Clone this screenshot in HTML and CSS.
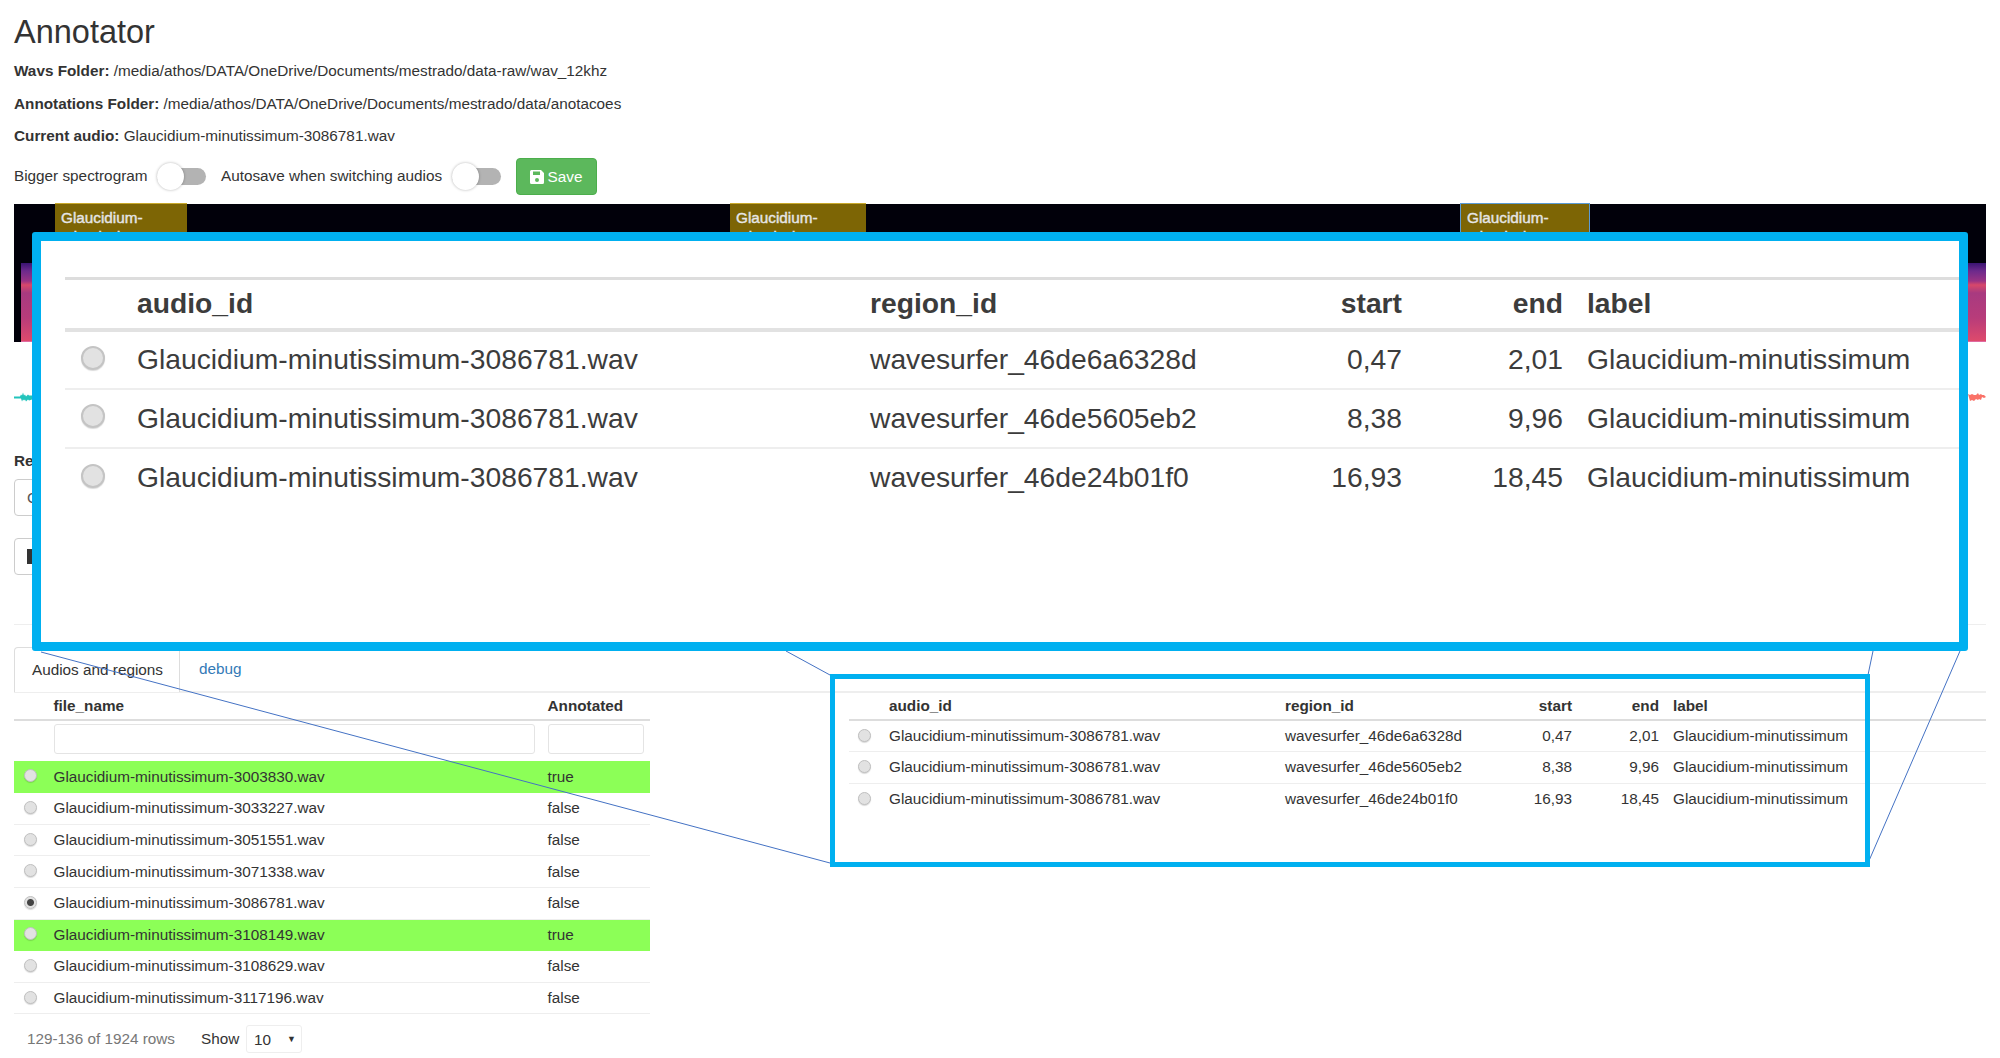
FILE: index.html
```html
<!DOCTYPE html>
<html lang="en">
<head>
  <meta charset="UTF-8">
  <title>Annotator</title>
  <link rel="stylesheet" href="styles.css">
</head>
<body>
  <h1>Annotator</h1>
  <p class="info"><b>Wavs Folder:</b> /media/athos/DATA/OneDrive/Documents/mestrado/data-raw/wav_12khz</p>
  <p class="info"><b>Annotations Folder:</b> /media/athos/DATA/OneDrive/Documents/mestrado/data/anotacoes</p>
  <p class="info"><b>Current audio:</b> Glaucidium-minutissimum-3086781.wav</p>

  <div class="controls">
    <span class="toggle-label">Bigger spectrogram</span>
    <span class="toggle"><span class="knob"></span></span>
    <span class="toggle-label">Autosave when switching audios</span>
    <span class="toggle"><span class="knob"></span></span>
    <button class="btn-save">
      <svg width="14" height="14" viewBox="0 0 14 14"><path fill="#fff" d="M1.500 0H11l3 3v9.500a1.500 1.500 0 0 1-1.500 1.500h-11A1.500 1.500 0 0 1 0 12.500v-11A1.500 1.500 0 0 1 1.500 0zM3 1.500V5h7V1.500zM7 8a2 2 0 1 0 0 4 2 2 0 0 0 0-4z"/></svg>
      Save
    </button>
  </div>

  <div class="spectrogram">
    <div class="spectrum"></div>
    <div class="region region-1">Glaucidium-minutissimum</div>
    <div class="region region-2">Glaucidium-minutissimum</div>
    <div class="region region-3">Glaucidium-minutissimum</div>
  </div>

  <div class="waveform">
    <svg class="wave-left" width="18" height="10" viewBox="0 0 18 10"><path fill="#22c4bc" d="M0 4.500h6l1-2 1 1 1-3 1 3 1-1 1 2 2-2 1 1 3 0v4l-3 1-1-1-2 2-1-2-1 1-1-1-1 2-1-3H0z"/></svg>
    <svg class="wave-right" width="18" height="10" viewBox="0 0 18 10"><path fill="#fa7268" d="M0 2l2 1 2-1 2 1 2 0 2-2 1 2 2-1 1 1 2 0 2 2-2 1-2-1-1 3-2-1-1 1-2-1-2 2-2-1-2 1z"/></svg>
  </div>

  <div class="region-form">
    <label class="field-label">Region label</label>
    <input class="text-input" type="text" value="Glaucidium-minutissimum">
    <button class="btn-play"><span class="play-bar"></span></button>
  </div>

  <hr class="divider">

  <ul class="tabs">
    <li class="tab active">Audios and regions</li>
    <li class="tab"><a href="#">debug</a></li>
  </ul>

  <div class="panes">
    <div class="pane-left">
      <table class="grid files">
        <colgroup><col class="c-radio"><col class="c-file"><col></colgroup>
        <thead>
          <tr><th></th><th>file_name</th><th>Annotated</th></tr>
          <tr class="filters">
            <td></td>
            <td><input class="filter" type="text"></td>
            <td><input class="filter filter-short" type="text"></td>
          </tr>
        </thead>
        <tbody>
          <tr class="done"><td><input class="radio" type="radio" name="f"></td><td>Glaucidium-minutissimum-3003830.wav</td><td>true</td></tr>
          <tr><td><input class="radio" type="radio" name="f"></td><td>Glaucidium-minutissimum-3033227.wav</td><td>false</td></tr>
          <tr><td><input class="radio" type="radio" name="f"></td><td>Glaucidium-minutissimum-3051551.wav</td><td>false</td></tr>
          <tr><td><input class="radio" type="radio" name="f"></td><td>Glaucidium-minutissimum-3071338.wav</td><td>false</td></tr>
          <tr><td><input class="radio" type="radio" name="f" checked></td><td>Glaucidium-minutissimum-3086781.wav</td><td>false</td></tr>
          <tr class="done"><td><input class="radio" type="radio" name="f"></td><td>Glaucidium-minutissimum-3108149.wav</td><td>true</td></tr>
          <tr><td><input class="radio" type="radio" name="f"></td><td>Glaucidium-minutissimum-3108629.wav</td><td>false</td></tr>
          <tr><td><input class="radio" type="radio" name="f"></td><td>Glaucidium-minutissimum-3117196.wav</td><td>false</td></tr>
        </tbody>
      </table>
      <div class="pager">
        <span class="pager-count">129-136 of 1924 rows</span>
        <span class="pager-show">Show</span>
        <span class="pager-select">10 <i class="caret">▼</i></span>
      </div>
    </div>

    <div class="pane-right">
      <table class="grid regions">
        <colgroup><col class="c-radio"><col class="c-audio"><col class="c-region"><col class="c-start"><col class="c-end"><col></colgroup>
        <thead>
          <tr><th></th><th>audio_id</th><th>region_id</th><th class="num">start</th><th class="num">end</th><th class="lab">label</th></tr>
        </thead>
        <tbody>
          <tr><td><input class="radio" type="radio" name="r"></td><td>Glaucidium-minutissimum-3086781.wav</td><td>wavesurfer_46de6a6328d</td><td class="num">0,47</td><td class="num">2,01</td><td class="lab">Glaucidium-minutissimum</td></tr>
          <tr><td><input class="radio" type="radio" name="r"></td><td>Glaucidium-minutissimum-3086781.wav</td><td>wavesurfer_46de5605eb2</td><td class="num">8,38</td><td class="num">9,96</td><td class="lab">Glaucidium-minutissimum</td></tr>
          <tr class="last"><td><input class="radio" type="radio" name="r"></td><td>Glaucidium-minutissimum-3086781.wav</td><td>wavesurfer_46de24b01f0</td><td class="num">16,93</td><td class="num">18,45</td><td class="lab">Glaucidium-minutissimum</td></tr>
        </tbody>
      </table>
    </div>
  </div>

  <!-- anotacao por cima da pagina -->
  <svg class="callout-lines" width="2000" height="1058" viewBox="0 0 2000 1058">
    <line x1="41" y1="652" x2="830" y2="863"/>
    <line x1="786" y1="651" x2="830" y2="675"/>
    <line x1="1873" y1="651" x2="1868" y2="675"/>
    <line x1="1960" y1="651" x2="1868" y2="863"/>
  </svg>
  <div class="frame-small"></div>

  <div class="zoom-box">
    <table class="grid regions-big">
      <colgroup><col class="c-radio"><col class="c-audio"><col class="c-region"><col class="c-start"><col class="c-end"><col></colgroup>
      <thead>
        <tr><th></th><th>audio_id</th><th>region_id</th><th class="num">start</th><th class="num">end</th><th class="lab">label</th></tr>
      </thead>
      <tbody>
        <tr><td><input class="radio" type="radio" name="b"></td><td>Glaucidium-minutissimum-3086781.wav</td><td>wavesurfer_46de6a6328d</td><td class="num">0,47</td><td class="num">2,01</td><td class="lab">Glaucidium-minutissimum</td></tr>
        <tr><td><input class="radio" type="radio" name="b"></td><td>Glaucidium-minutissimum-3086781.wav</td><td>wavesurfer_46de5605eb2</td><td class="num">8,38</td><td class="num">9,96</td><td class="lab">Glaucidium-minutissimum</td></tr>
        <tr class="last"><td><input class="radio" type="radio" name="b"></td><td>Glaucidium-minutissimum-3086781.wav</td><td>wavesurfer_46de24b01f0</td><td class="num">16,93</td><td class="num">18,45</td><td class="lab">Glaucidium-minutissimum</td></tr>
      </tbody>
    </table>
  </div>
</body>
</html>
```

FILE: styles.css
```css
* {
  box-sizing: border-box;
}
body {
  font-family: "Liberation Sans", Arial, sans-serif;
  font-size: 15.3px;
  color: #333;
  background: #fff;
  margin: 0;
  padding: 0 14px;
  position: relative;
  height: 1058px;
  overflow: hidden;
}
h1 {
  font-size: 32.5px;
  font-weight: 400;
  line-height: 36px;
  margin: 0;
  padding-top: 14px;
  height: 55px;
}
.info {
  margin: 0;
  height: 32.7px;
  line-height: 32.7px;
}

/* controles */
.controls {
  display: flex;
  align-items: center;
  height: 37px;
  margin-top: 5px;
}
.toggle-label {
  padding-bottom: 2px;
}
.toggle {
  position: relative;
  display: block;
  width: 49px;
  height: 17px;
  margin: 0 14.500px 0 10px;
  background: #b3b3b3;
  border-radius: 9px;
}
.knob {
  position: absolute;
  left: 0;
  top: -5px;
  width: 27px;
  height: 27px;
  border-radius: 50%;
  background: #fff;
  box-shadow: 0 0 3px rgba(0, 0, 0, 0.3);
}
.btn-save {
  display: flex;
  align-items: center;
  gap: 4px;
  width: 81px;
  height: 37px;
  padding: 0 0 0 13px;
  font: inherit;
  color: #fff;
  background: #5cb85c;
  border: 1px solid #4cae4c;
  border-radius: 4px;
}

/* espectrograma */
.spectrogram {
  position: relative;
  height: 138px;
  margin-top: 9px;
  background: #01000a;
}
.spectrum {
  position: absolute;
  left: 7px;
  right: 0;
  top: 59px;
  bottom: 0;
  background: linear-gradient(#3a1472 0, #6d2a8c 8px, #9a3384 18px, #d8486a 22px, #a83a80 30px, #b83c7a 55px, #de4a6c 78px);
  border-bottom: 1px solid #e06aa0;
}
.region {
  position: absolute;
  top: -1px;
  bottom: 0;
  padding: 4px 6px 0;
  font-size: 15.3px;
  line-height: 19px;
  color: #e6e6e6;
  -webkit-text-stroke: 0.4px #e6e6e6;
  background: #7d6505;
  border-top: 1px solid #c9a92c;
}
.region-1 {
  left: 41px;
  width: 132px;
}
.region-2 {
  left: 716px;
  width: 136px;
}
.region-3 {
  left: 1446px;
  width: 130px;
  border: 1px solid #5b9bd5;
  border-bottom: 0;
}

/* onda */
.waveform {
  position: relative;
  height: 109px;
}
.wave-left {
  position: absolute;
  left: 0;
  top: 50px;
}
.wave-right {
  position: absolute;
  right: 0;
  top: 50px;
}

/* formulario tapado */
.field-label {
  display: block;
  font-weight: bold;
  line-height: 20px;
}
.text-input {
  display: block;
  width: 400px;
  height: 37px;
  margin-top: 8px;
  padding: 0 12px;
  font: inherit;
  color: #555;
  border: 1px solid #ccc;
  border-radius: 4px;
}
.btn-play {
  display: block;
  width: 60px;
  height: 37px;
  margin-top: 22px;
  padding: 0 0 0 12px;
  background: #fff;
  border: 1px solid #ccc;
  border-radius: 4px;
}
.play-bar {
  display: block;
  width: 10px;
  height: 15px;
  background: #333;
}
.divider {
  height: 0;
  margin: 49px 0 22px;
  border: 0;
  border-top: 1px solid #eee;
}

/* abas */
.tabs {
  display: flex;
  height: 46px;
  margin: 0;
  padding: 0;
  list-style: none;
  border-bottom: 2px solid #eee;
}
.tab {
  height: 45px;
  padding: 12px 19px 0;
  line-height: 20px;
  white-space: nowrap;
}
.tab a {
  color: #337ab7;
  text-decoration: none;
}
.tab.active {
  width: 166px;
  padding-left: 17px;
  background: #fff;
  border: 1px solid #ddd;
  border-bottom: 0;
  border-radius: 4px 4px 0 0;
}

/* tabelas */
.panes {
  display: flex;
  margin-top: -1px;
}
.pane-left {
  width: 636px;
}
.pane-right {
  width: 1137px;
  margin-left: 199px;
}
.grid {
  width: 100%;
  border-collapse: collapse;
  table-layout: fixed;
}
.grid th {
  height: 28px;
  padding: 0;
  text-align: left;
  font-weight: bold;
  border-bottom: 2px solid #ddd;
}
.grid td {
  height: 31.6px;
  padding: 0;
  white-space: nowrap;
  border-bottom: 1px solid #eee;
}
.grid .last td {
  border-bottom: 0;
}
.grid .num {
  text-align: right;
}
.grid .lab {
  padding-left: 14px;
}
.radio {
  display: block;
  width: 13px;
  height: 13px;
  margin: 0 0 2px 9px;
  -webkit-appearance: none;
  appearance: none;
  background: #e2e2e2;
  border: 1px solid #c0c0c0;
  border-radius: 50%;
  box-shadow: 0 1px 1px rgba(0, 0, 0, 0.15);
}
.radio:checked {
  background: radial-gradient(circle, #444 0, #444 3px, #e2e2e2 4px);
}
.files .c-radio {
  width: 39.5px;
}
.files .c-file {
  width: 494px;
}
.files tr.done td {
  background: #8cff57;
  border-bottom-color: #8cff57;
}
.files .radio {
  margin-left: 10px;
}
.filters td {
  height: 41px;
  border-bottom: 0;
}
.filter {
  display: block;
  width: 481px;
  height: 30px;
  margin-bottom: 5px;
  background: #fff;
  border: 1px solid #e4e4e4;
  border-radius: 3px;
}
.filter-short {
  width: 96px;
}
.pager {
  display: flex;
  align-items: center;
  height: 28px;
  margin-top: 11px;
  padding-left: 13px;
}
.pager-count {
  width: 174px;
  color: #777;
}
.pager-show {
  width: 45px;
}
.pager-select {
  position: relative;
  display: block;
  width: 56px;
  height: 28px;
  padding-left: 7px;
  line-height: 28px;
  border: 1px solid #eee;
  border-radius: 3px;
}
.caret {
  position: absolute;
  right: 5px;
  top: -1px;
  font-size: 9px;
  font-style: normal;
}
.regions .c-radio {
  width: 40px;
}
.regions .c-audio {
  width: 396px;
}
.regions .c-region {
  width: 200px;
}
.regions .c-start {
  width: 87px;
}
.regions .c-end {
  width: 87px;
}

/* caixas azuis */
.callout-lines {
  position: absolute;
  left: 0;
  top: 0;
}
.callout-lines line {
  stroke: #4472c4;
  stroke-width: 1;
}
.frame-small {
  position: absolute;
  left: 830px;
  top: 674px;
  width: 1040px;
  height: 193px;
  border: 5px solid #00b0f0;
}
.zoom-box {
  position: absolute;
  left: 32px;
  top: 232px;
  width: 1936px;
  height: 419px;
  padding: 36px 0 0 24px;
  background: #fff;
  border: 9px solid #00b0f0;
  border-radius: 3px;
}
.regions-big {
  font-size: 28.25px;
  border-top: 3px solid #ddd;
  color: #3c3c3c;
}
.regions-big th {
  height: 51px;
  border-bottom: 4px solid #e2e2e2;
}
.regions-big td {
  height: 59px;
  border-bottom: 2px solid #eee;
}
.regions-big .c-radio {
  width: 72px;
}
.regions-big .c-audio {
  width: 733px;
}
.regions-big .c-region {
  width: 372px;
}
.regions-big .c-start {
  width: 160px;
}
.regions-big .c-end {
  width: 161px;
}
.regions-big .lab {
  padding-left: 24px;
}
.regions-big .radio {
  width: 24px;
  height: 24px;
  margin: 0 0 4px 16px;
  border: 2px solid #c4c4c4;
}
```
